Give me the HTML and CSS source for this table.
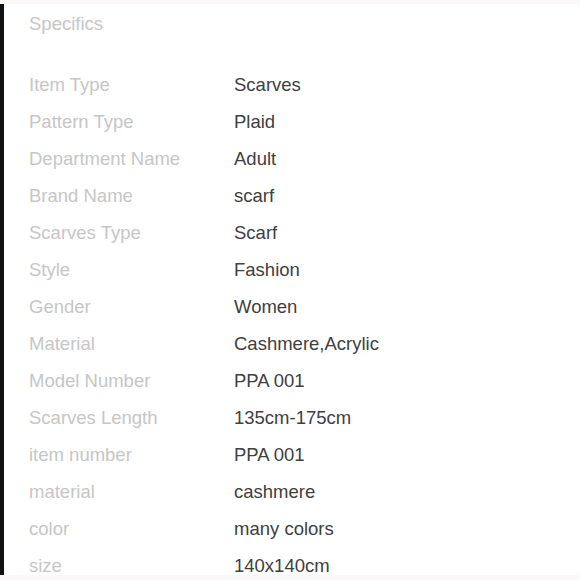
FILE: index.html
```html
<!DOCTYPE html>
<html>
<head>
<meta charset="utf-8">
<link rel="stylesheet" href="styles.css">
</head>
<body>
<div class="panel">
  <h2 class="title">Specifics</h2>
  <dl class="specs">
    <dt>Item Type</dt><dd>Scarves</dd>
    <dt>Pattern Type</dt><dd>Plaid</dd>
    <dt>Department Name</dt><dd>Adult</dd>
    <dt>Brand Name</dt><dd>scarf</dd>
    <dt>Scarves Type</dt><dd>Scarf</dd>
    <dt>Style</dt><dd>Fashion</dd>
    <dt>Gender</dt><dd>Women</dd>
    <dt>Material</dt><dd>Cashmere,Acrylic</dd>
    <dt>Model Number</dt><dd>PPA 001</dd>
    <dt>Scarves Length</dt><dd>135cm-175cm</dd>
    <dt>item number</dt><dd>PPA 001</dd>
    <dt>material</dt><dd>cashmere</dd>
    <dt>color</dt><dd>many colors</dd>
    <dt>size</dt><dd>140x140cm</dd>
  </dl>
</div>
</body>
</html>
```
FILE: styles.css
```css
html, body {
  margin: 0;
  padding: 0;
  background: #fcf8f8;
  height: 580px;
  overflow: hidden;
}
.panel {
  margin-top: 4px;
  height: 571px;
  padding-top: 1px;
  background: #ffffff;
  border-left: 4px solid #111111;
  padding-left: 25px;
  box-sizing: border-box;
  font-family: "Liberation Sans", Arial, sans-serif;
  font-size: 18.5px;
  overflow: hidden;
}
.title {
  margin: 0;
  font-size: 18.5px;
  font-weight: normal;
  line-height: 37px;
  color: #c6c6c6;
}
.specs {
  margin: 25px 0 0 0;
  display: grid;
  grid-template-columns: 205px 1fr;
  grid-auto-rows: 36.95px;
  align-items: center;
}
.specs dt {
  color: #c6c6c6;
}
.specs dd {
  margin: 0;
  color: #404040;
}
```
